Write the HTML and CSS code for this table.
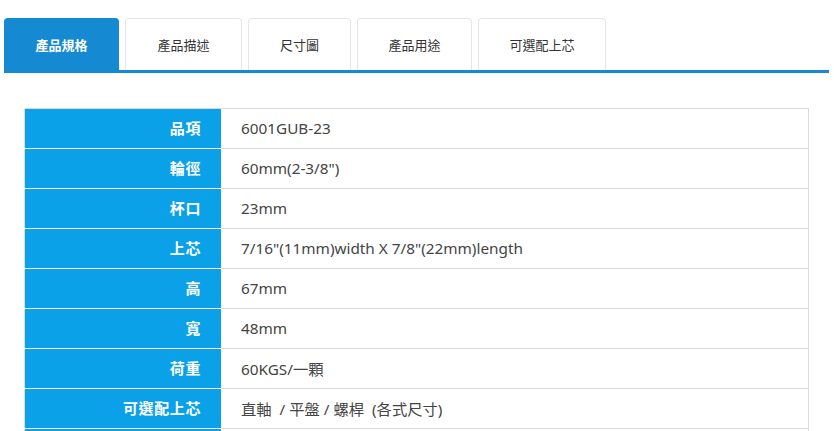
FILE: index.html
```html
<!DOCTYPE html>
<html lang="zh-Hant">
<head>
<meta charset="utf-8">
<title>產品規格</title>
<link rel="stylesheet" href="styles.css">
</head>
<body>
<div class="tabs">
  <div class="tab active t1">產品規格</div>
  <div class="tab t2">產品描述</div>
  <div class="tab t3">尺寸圖</div>
  <div class="tab t4">產品用途</div>
  <div class="tab t5">可選配上芯</div>
</div>
<table class="spec">
  <tr><th>品項</th><td>6001GUB-23</td></tr>
  <tr><th>輪徑</th><td>60mm(2-3/8")</td></tr>
  <tr><th>杯口</th><td>23mm</td></tr>
  <tr><th>上芯</th><td>7/16"(11mm)width X 7/8"(22mm)length</td></tr>
  <tr><th>高</th><td>67mm</td></tr>
  <tr><th>寬</th><td>48mm</td></tr>
  <tr><th>荷重</th><td>60KGS/一顆</td></tr>
  <tr><th>可選配上芯</th><td>直軸 &nbsp;/ 平盤 / 螺桿 &nbsp;(各式尺寸)</td></tr>
  <tr><th>&nbsp;</th><td>&nbsp;</td></tr>
</table>
</body>
</html>
```

FILE: styles.css
```css
html, body {
  margin: 0;
  padding: 0;
  background: #fff;
  font-family: "Noto Sans", "Noto Sans CJK TC", sans-serif;
}

.tabs {
  display: flex;
  gap: 6px;
  margin: 18px 0 0 4px;
  width: 825px;
  border-bottom: 3px solid #1589d1;
}

.tab {
  height: 52px;
  box-sizing: border-box;
  display: flex;
  align-items: center;
  justify-content: center;
  border: 1px solid #e6e6e6;
  border-bottom: none;
  border-radius: 4px 4px 0 0;
  font-size: 13px;
  color: #333;
  background: #fff;
}

.tab.active {
  background: #1589d1;
  border-color: #1589d1;
  color: #fff;
  font-weight: bold;
}

.t1 { width: 115px; }
.t2 { width: 117px; }
.t3 { width: 103px; }
.t4 { width: 115px; }
.t5 { width: 128px; }

.spec {
  margin: 35px 0 0 24px;
  width: 785px;
  border-collapse: collapse;
  border: 1px solid #dcdcdc;
}

.spec th,
.spec td {
  height: 37px;
  padding: 0 20px 2px;
  font-size: 15px;
  border-top: 1px solid #dcdcdc;
}

.spec th {
  width: 156px;
  background: #0ba1e8;
  color: #fff;
  text-align: right;
  font-weight: bold;
  letter-spacing: 0.6px;
  border-top: 1px solid #fff;
}

.spec tr:first-child th {
  border-top: 1px solid #dcdcdc;
}

.spec td {
  color: #444;
  font-size: 15.3px;
  text-align: left;
}
```
